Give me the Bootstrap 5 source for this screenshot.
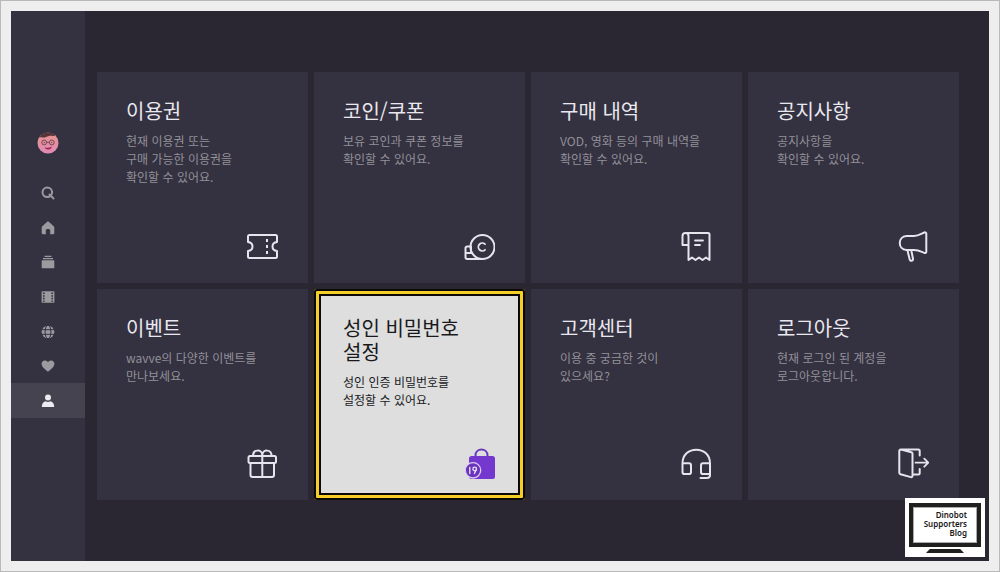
<!DOCTYPE html>
<html lang="ko">
<head>
<meta charset="utf-8">
<meta name="viewport" content="width=device-width, initial-scale=1">
<title>마이 메뉴</title>
<link rel="stylesheet" href="https://cdn.jsdelivr.net/npm/bootstrap@5.3.0/dist/css/bootstrap.min.css">
<style>
  body { font-family: "Noto Sans CJK KR", "Noto Sans", sans-serif; background: #eee; }
  .page-frame { border: 1px solid #b9b9b9; padding: 10px; min-height: 100vh; }
  .tv-screen { background: #2a2732; }
  .side-bar { width: 74px; background: #343241; padding-top: 121px; }
  .avatar { width: 22px; height: 22px; }
  .side-nav { height: 242px; margin-top: 22px; }
  .side-nav a { color: #9b9a9f; }
  .side-nav a.active { background: #454350; color: #ececf0; }
  .side-nav svg { width: 14px; height: 14px; }
  .menu-area { padding: 61px 30px 60px 12px; }
  .menu-grid { --bs-gutter-x: 6px; --bs-gutter-y: 6px; }
  .tile { aspect-ratio: 1; background: #343141; color: #e9e8ee; padding: 27px 30px 20px 29px; }
  .tile h2 { font-size: 20px; line-height: 24px; font-weight: 400; margin-bottom: 9px; }
  .tile p { font-size: 12px; line-height: 18px; color: #929097; }
  .tile .glyph { width: 32px; height: 32px; fill: none; stroke: #e6e4ec; stroke-width: 2; stroke-linejoin: round; stroke-linecap: round; }
  .tile.selected { background: #dedede; color: #19191c; border-radius: 3px;
    box-shadow: inset 0 0 0 2px #0b0808, inset 0 0 0 5px #f5cf26, inset 0 0 0 7px #0b0808; }
  .tile.selected p { color: #19191c; }
  .blog-mark { right: 4px; bottom: 4px; width: 80px; background: #fff; padding: 5px 4px 4px; }
  .blog-set { border: 4px solid #20201f; outline: 1px solid #aaa; outline-offset: -5px; height: 44px; padding: 3px 10px 0 0; color: #171717;
    font: 600 8px/9px "Noto Sans", sans-serif; }
  .blog-stand { width: 38px; height: 4px; background: #20201f; margin-top: 2px; clip-path: polygon(10% 0, 90% 0, 100% 100%, 0 100%); }
</style>
</head>
<body>
<div class="page-frame d-flex">
  <div class="tv-screen d-flex flex-fill position-relative">
    <aside class="side-bar flex-shrink-0 d-flex flex-column">
      <svg class="avatar mx-auto" viewBox="0 0 22 22" role="img" aria-label="프로필">
        <defs><linearGradient id="skin" x1="0" y1="0" x2="0" y2="1"><stop offset="0" stop-color="#e8958c"/><stop offset="1" stop-color="#e08ab8"/></linearGradient></defs>
        <circle cx="11" cy="11" r="10.500" fill="url(#skin)"/>
        <path d="M2.300 5.200C4 2 8 .3 11 .5c3.500.1 5.500 1.200 7 3-2 1.200-3.500 0-6 .4-3 .5-4 1.900-6.500 1.500-1.500-.2-2.300.1-3.200-.2z" fill="#553539"/>
        <g fill="none" stroke="#6b3f4b" stroke-width=".9"><circle cx="7.200" cy="10.500" r="2.400"/><circle cx="14.800" cy="10.500" r="2.400"/><path d="M9.600 10.300h2.800"/></g>
        <circle cx="7.300" cy="10.600" r=".7" fill="#6b3f4b"/><circle cx="14.700" cy="10.600" r=".7" fill="#6b3f4b"/>
        <path d="M7.500 15.200c2.500 1 5 .6 7.300-.8-.5 4-5.800 4.200-7.300.8z" fill="#a02a52"/>
      </svg>
      <nav class="side-nav d-flex flex-column">
        <a href="#" aria-label="검색" class="flex-fill d-flex align-items-center justify-content-center"><svg viewBox="0 0 14 14" fill="none" stroke="currentColor" stroke-width="2"><circle cx="6.300" cy="6.300" r="4.800"/><path d="M8.500 8.500l4 4" stroke-linecap="round"/></svg></a>
        <a href="#" aria-label="홈" class="flex-fill d-flex align-items-center justify-content-center"><svg viewBox="0 0 14 14" fill="currentColor"><path d="M7 .5c.4 0 .7.1 1 .4l4.700 4.300c.4.4.6.8.6 1.300V12c0 .8-.5 1.200-1.200 1.200H9.200V9.500c0-1-.8-1.500-2.200-1.500s-2.200.5-2.200 1.500v3.700H1.900c-.7 0-1.200-.4-1.200-1.200V6.500c0-.5.200-.9.600-1.300L6 .9c.3-.3.6-.4 1-.4z"/></svg></a>
        <a href="#" aria-label="보관함" class="flex-fill d-flex align-items-center justify-content-center"><svg viewBox="0 0 14 14" fill="currentColor"><path d="M3.500.7h7v1.200h-7zM2 3h10v1.200H2zM1.300 5.300h11.400c.4 0 .6.200.6.600v6.700c0 .4-.2.700-.7.700H1.400c-.5 0-.7-.3-.7-.7V5.900c0-.4.2-.6.6-.6z"/></svg></a>
        <a href="#" aria-label="영화" class="flex-fill d-flex align-items-center justify-content-center"><svg viewBox="0 0 14 14"><rect x=".6" y="1.300" width="12.800" height="11.400" rx=".8" fill="currentColor"/><path d="M2.800 2.600v9.200M11.200 2.600v9.200" stroke="#343241" stroke-width="1.700" stroke-dasharray="1.500 1.100"/></svg></a>
        <a href="#" aria-label="해외" class="flex-fill d-flex align-items-center justify-content-center"><svg viewBox="0 0 14 14"><circle cx="7" cy="7" r="6.300" fill="currentColor"/><g fill="none" stroke="#343241" stroke-width="1"><ellipse cx="7" cy="7" rx="2.900" ry="7"/><path d="M.5 4.700h13M.5 9.300h13"/></g></svg></a>
        <a href="#" aria-label="찜" class="flex-fill d-flex align-items-center justify-content-center"><svg viewBox="0 0 14 14" fill="currentColor"><path d="M7 12.700C3.700 10.300.6 7.700.6 4.800.6 2.700 2 1.400 3.900 1.400 5.200 1.400 6.300 2 7 3c.7-1 1.800-1.600 3.100-1.600 1.900 0 3.300 1.300 3.300 3.400 0 2.900-3.100 5.500-6.400 7.900z"/></svg></a>
        <a href="#" aria-label="마이" aria-current="page" class="active flex-fill d-flex align-items-center justify-content-center"><svg viewBox="0 0 14 14" fill="currentColor"><circle cx="7" cy="3.500" r="3"/><path d="M.8 12.900c0-3.600 2-5.400 4-5.700 1.200.9 3.200.9 4.400 0 2 .3 4 2.100 4 5.700z"/></svg></a>
      </nav>
    </aside>

    <main class="menu-area flex-fill">
      <div class="row row-cols-4 menu-grid mt-0">
        <div class="col mt-0"><a href="#" class="tile d-flex flex-column text-decoration-none"><h2>이용권</h2><p class="mb-0">현재 이용권 또는<br>구매 가능한 이용권을<br>확인할 수 있어요.</p>
          <svg class="glyph mt-auto ms-auto" viewBox="0 0 32 32"><path d="M3.500 4h26c1 0 1.500.5 1.500 1.500V11c-6 .8-6 8.200 0 9v5.500c0 1-.5 1.500-1.500 1.500h-26c-1 0-1.500-.5-1.500-1.500V20c6-.8 6-8.200 0-9V5.500C2 4.500 2.500 4 3.500 4z"/><path d="M21 8v3M21 14v3M21 20v3" stroke-linecap="butt"/></svg></a></div>
        <div class="col mt-0"><a href="#" class="tile d-flex flex-column text-decoration-none"><h2>코인/쿠폰</h2><p class="mb-0">보유 코인과 쿠폰 정보를<br>확인할 수 있어요.</p>
          <svg class="glyph mt-auto ms-auto" viewBox="0 0 32 32"><circle cx="19.500" cy="16" r="12"/><path d="M8 15.500H4.300c-1 0-1.800.8-1.800 1.800v9c0 1 .8 1.700 1.800 1.700h15.200M3 22h6M8 15.500V22"/><path d="M22 13.200a3.900 3.900 0 1 0 0 5.600" stroke-width="1.800"/></svg></a></div>
        <div class="col mt-0"><a href="#" class="tile d-flex flex-column text-decoration-none"><h2>구매 내역</h2><p class="mb-0">VOD, 영화 등의 구매 내역을<br>확인할 수 있어요.</p>
          <svg class="glyph mt-auto ms-auto" viewBox="0 0 32 32"><path d="M5.500 2H28c1 0 1.500.5 1.500 1.500V29L26 26.500 22.500 29 19 26.500 15.500 29 12 26.500 8.500 29V5c0-4-6-4-6 0v9h6"/><path d="M15 9.500h8M15 14h5" stroke-width="1.800"/></svg></a></div>
        <div class="col mt-0"><a href="#" class="tile d-flex flex-column text-decoration-none"><h2>공지사항</h2><p class="mb-0">공지사항을<br>확인할 수 있어요.</p>
          <svg class="glyph mt-auto ms-auto" viewBox="0 0 32 32"><path d="M9.500 5H17c4.500 0 7.300-2.300 10.300-3.500 1-.4 2 .2 2 1.200v18c0 1-1 1.600-2 1.200-3-1.200-5.800-2.900-10.300-2.900H9.500C.5 18.600.5 5.400 9.500 5z"/><path d="M10.500 19.500l2.200 9c.5 2.200 3.600 1.400 3.300-.8l-1.700-8.200" stroke-width="2"/></svg></a></div>
        <div class="col"><a href="#" class="tile d-flex flex-column text-decoration-none"><h2>이벤트</h2><p class="mb-0">wavve의 다양한 이벤트를<br>만나보세요.</p>
          <svg class="glyph mt-auto ms-auto" viewBox="0 0 32 32"><rect x="2.500" y="8" width="27.500" height="7" rx="1.500"/><path d="M4.500 15v12c0 1.300.7 2 2 2H26c1.300 0 2-.7 2-2V15M16.300 8v21M7 8c0-7 8.800-7 9.300-1 .5-6 9.300-6 9.300 1"/></svg></a></div>
        <div class="col"><a href="#" class="tile selected d-flex flex-column text-decoration-none"><h2>성인 비밀번호<br>설정</h2><p class="mb-0">성인 인증 비밀번호를<br>설정할 수 있어요.</p>
          <svg class="glyph mt-auto ms-auto" viewBox="0 0 32 32"><path d="M12.500 11V7.500c0-8 12-8 12 0V11" stroke="#6b38bd"/><rect x="6" y="8" width="26" height="23" rx="2.500" fill="#7538cf" stroke="none"/><circle cx="10" cy="22.300" r="7.700" fill="#6935bb" stroke="#dcccf2" stroke-width="1.300"/><g stroke="#eee3fa" stroke-width="1.300"><path d="M6.800 19.500v6"/><circle cx="11.700" cy="21" r="1.800"/><path d="M13.400 21.500l-2 4"/></g></svg></a></div>
        <div class="col"><a href="#" class="tile d-flex flex-column text-decoration-none"><h2>고객센터</h2><p class="mb-0">이용 중 궁금한 것이<br>있으세요?</p>
          <svg class="glyph mt-auto ms-auto" viewBox="0 0 32 32"><path d="M2.500 15.500c0-18.500 27.500-18.500 27.500 0V27c0 2-1 3-3 3h-6.500M2.500 15.500v8.700c0 1.300.7 1.800 1.800 1.800H9c1.300 0 2-.6 2-1.800v-7c0-1.200-.7-1.900-2-1.900H2.500M30 15.300h-7c-1.300 0-2 .7-2 1.900v7c0 1.200.7 1.800 2 1.800h7"/></svg></a></div>
        <div class="col"><a href="#" class="tile d-flex flex-column text-decoration-none"><h2>로그아웃</h2><p class="mb-0">현재 로그인 된 계정을<br>로그아웃합니다.</p>
          <svg class="glyph mt-auto ms-auto" viewBox="0 0 32 32"><path d="M4 1.500l10.300 2.800c.8.200 1.200.7 1.200 1.400v22.100c0 1-.7 1.600-1.600 1.300L3.500 26.200c-.8-.2-1.200-.8-1.200-1.500V3c0-1 .6-1.500 1.500-1.500h17.400c1 0 1.500.5 1.500 1.500v4.500M22.700 21v4c0 1-.5 1.500-1.500 1.500h-5.500"/><path d="M18.500 14.700h12.800M27.300 10.700l4 4-4 4" stroke-width="1.800"/></svg></a></div>
      </div>
    </main>

    <div class="blog-mark position-absolute">
      <div class="blog-set text-end">Dinobot<br>Supporters<br>Blog</div>
      <div class="blog-stand mx-auto"></div>
    </div>
  </div>
</div>
<script src="https://cdn.jsdelivr.net/npm/bootstrap@5.3.0/dist/js/bootstrap.bundle.min.js"></script>
</body>
</html>
